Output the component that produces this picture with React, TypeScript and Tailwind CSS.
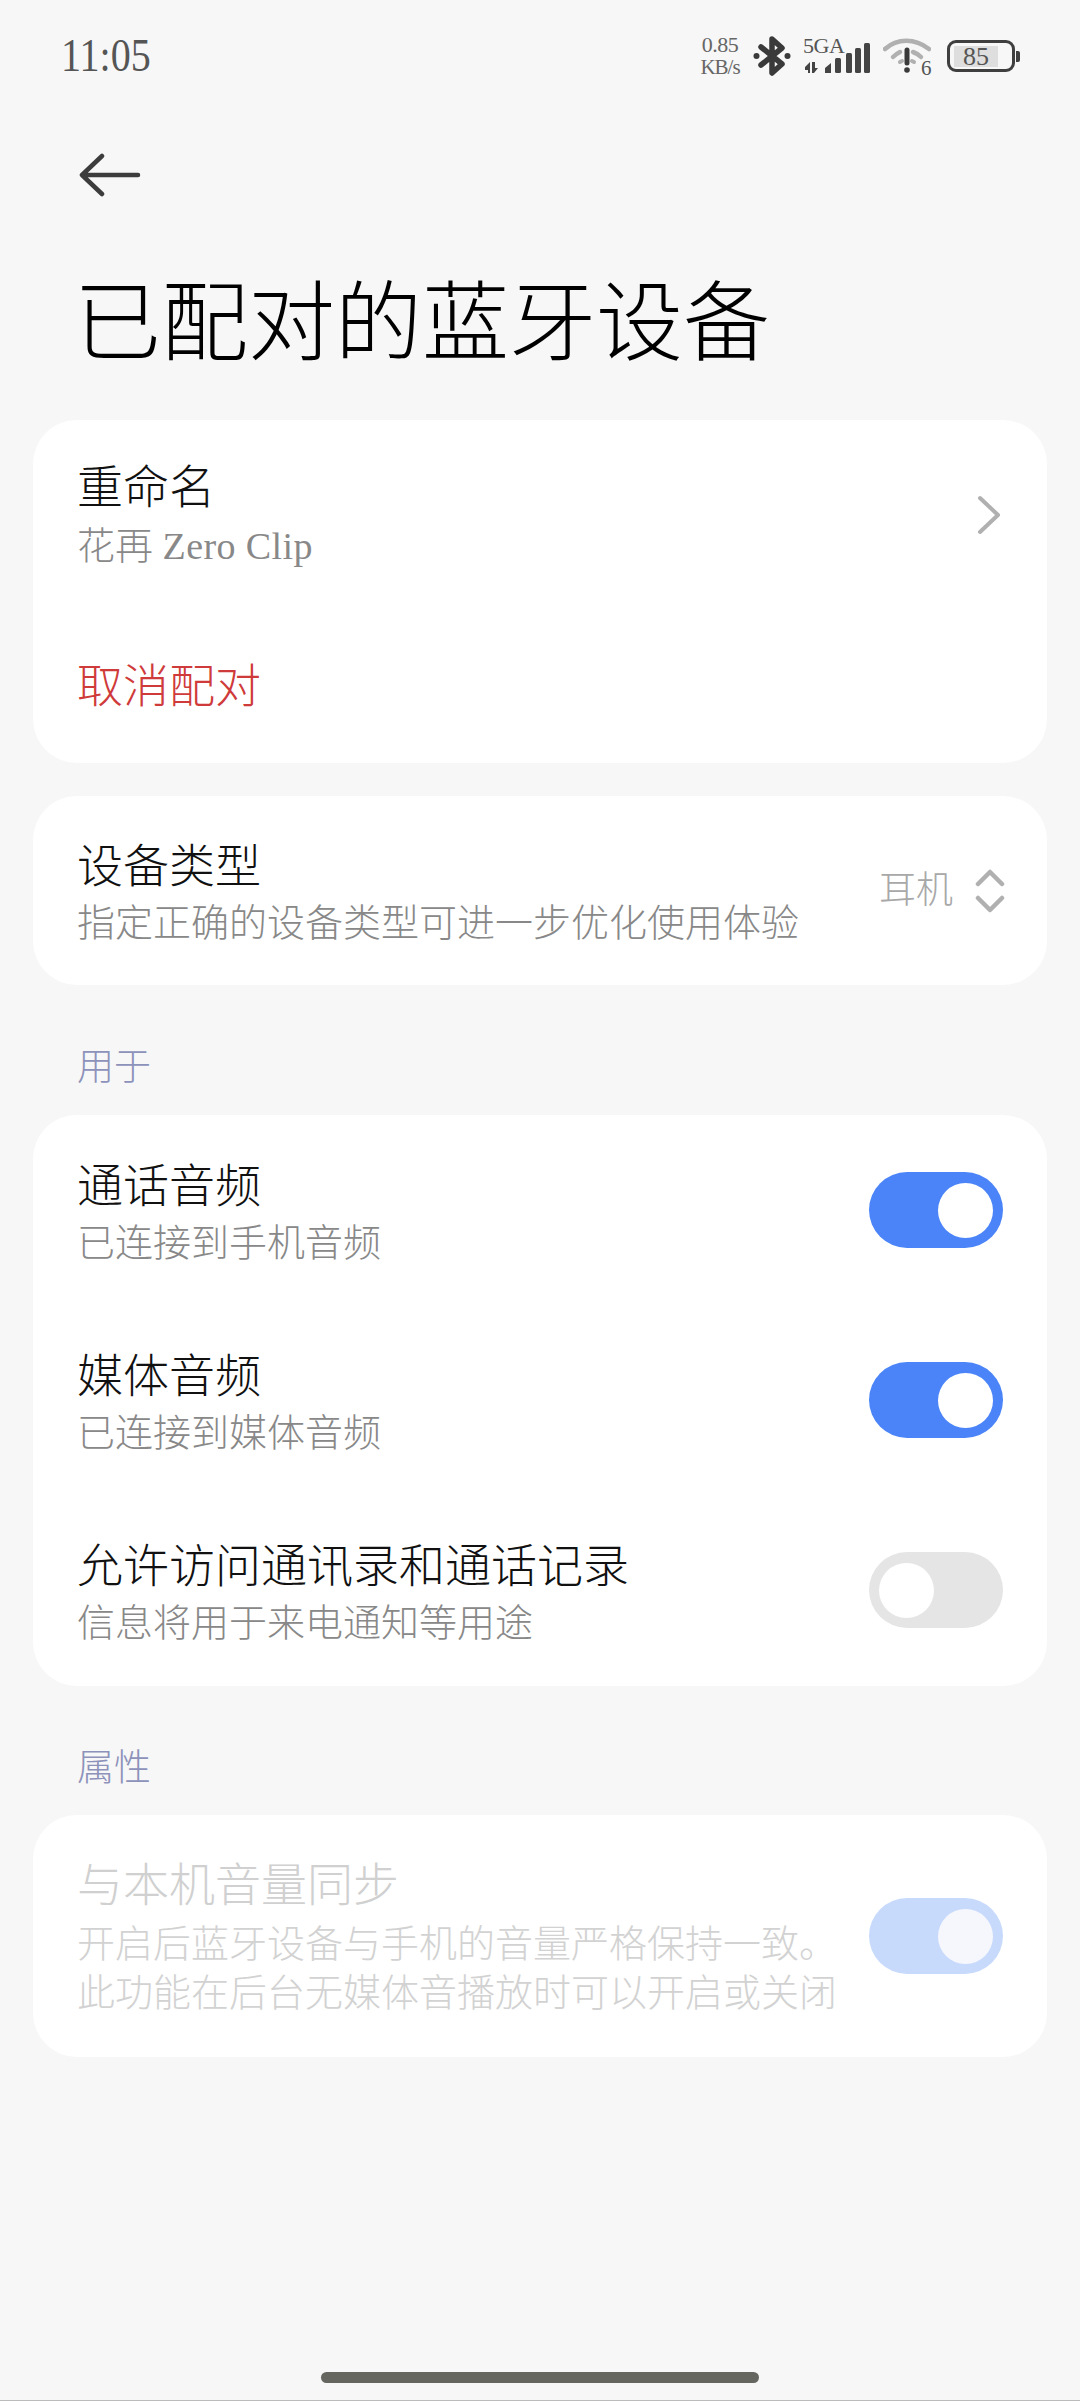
const serif = "font-['Liberation_Serif','Noto_Sans_CJK_SC',serif] font-light";

function Toggle({ on, disabled }: { on: boolean; disabled?: boolean }) {
  const track = disabled ? "bg-[#c7dafc]" : on ? "bg-[#4a84f8]" : "bg-[#e5e5e5]";
  const knob = disabled ? "bg-[#f6f7fd]" : "bg-white";
  return (
    <div
      className={`flex h-[76px] w-[134px] shrink-0 items-center rounded-full px-[10px] ${track} ${
        on ? "justify-end" : "justify-start"
      }`}
    >
      <div className={`size-[55px] rounded-full ${knob}`} />
    </div>
  );
}

function Row({ title, sub, on }: { title: string; sub: string; on: boolean }) {
  return (
    <div className="flex h-[190px] items-center justify-between pl-[44px] pr-[44px]">
      <div className="self-start pt-[42px]">
        <div className="h-[60px] text-[46px] leading-[60px] text-[#111]">{title}</div>
        <div className="mt-[1px] h-[50px] text-[38px] leading-[50px] text-[#888]">{sub}</div>
      </div>
      <Toggle on={on} />
    </div>
  );
}

function StatusIcons() {
  return (
    <div className="flex items-center text-[#444]">
      <div className="flex w-[44px] flex-col items-center text-[22px] leading-[22px] tracking-[-0.5px] text-[#666]">
        <span>0.85</span>
        <span className="text-[21px] tracking-[-1px]">KB/s</span>
      </div>
      <svg width="38" height="42" viewBox="0 0 38 42" fill="none" stroke="#3a3a3a" strokeWidth="5.5" strokeLinecap="round" strokeLinejoin="round" className="ml-[11px]">
        <path d="M8 12 L29 29 L19 38 V4 L29 13 L8 30" />
        <circle cx="3.5" cy="21" r="3" fill="#3a3a3a" stroke="none" />
        <circle cx="34.5" cy="21" r="3" fill="#3a3a3a" stroke="none" />
      </svg>
      <div className="relative ml-[12px] h-[36px] w-[68px]">
        <span className="absolute left-0 top-[-3px] text-[22px] leading-[22px] tracking-[-0.5px] text-[#555]">5GA</span>
        <svg className="absolute inset-0" width="68" height="36" viewBox="0 0 68 36" fill="#444">
          <path d="M2 29 L7 24 V35 H5 V32 H2 Z" />
          <path d="M9 24 H12 V30 L15 30 L11 35 H9 Z" />
          <path d="M22 35 V30 L28 25 V35 Z" />
          <rect x="32" y="20" width="6" height="15" rx="1.5" />
          <rect x="43" y="15" width="6" height="20" rx="1.5" />
          <rect x="52" y="10" width="6" height="25" rx="1.5" />
          <rect x="61" y="5" width="6" height="30" rx="1.5" />
        </svg>
      </div>
      <div className="relative ml-[12px] h-[38px] w-[48px]">
        <svg className="absolute inset-0" width="48" height="38" viewBox="0 0 48 38" fill="none" strokeLinecap="round">
          <path d="M2 12 C14 1 32 1 46 12" stroke="#b0b0b0" strokeWidth="4.5" />
          <path d="M10 20 C13 17 15 16 17 15" stroke="#b0b0b0" strokeWidth="4.5" />
          <path d="M30 15 C33 16 35 17 38 20" stroke="#b0b0b0" strokeWidth="4.5" />
          <path d="M17 25 L19 24" stroke="#b0b0b0" strokeWidth="4" />
          <path d="M29 24 L31 25" stroke="#b0b0b0" strokeWidth="4" />
          <path d="M24 13 V26" stroke="#3a3a3a" strokeWidth="5" />
          <circle cx="24" cy="33" r="2.8" fill="#3a3a3a" />
        </svg>
        <span className="absolute left-[38px] top-[20px] text-[21px] leading-[22px] text-[#555]">6</span>
      </div>
      <div className="ml-[16px] flex items-center">
        <div className="flex h-[32px] w-[68px] items-center rounded-[9px] border-[3px] border-[#3f3f3f] px-[4px]">
          <div className="flex h-[21px] w-[44px] items-center justify-center bg-[#dedede] text-[26px] text-[#555]">85</div>
        </div>
        <div className="ml-[1px] h-[11px] w-[4px] rounded-r-[2px] bg-[#3f3f3f]" />
      </div>
    </div>
  );
}

export default function App() {
  return (
    <div className={`relative h-[2401px] w-[1080px] overflow-hidden bg-[#f7f7f7] ${serif}`}>
      <div className="flex h-[112px] items-center justify-between pl-[61px] pr-[60px]">
        <span className="mb-[2px] origin-left scale-x-[0.87] text-[46px] text-[#555]">11:05</span>
        <StatusIcons />
      </div>
      <div className="flex h-[124px] items-center pl-[79px] pt-[2px]">
        <svg width="62" height="44" viewBox="0 0 62 44" fill="none" stroke="#3c3c3c" strokeWidth="4.5" strokeLinecap="round" strokeLinejoin="round">
          <path d="M59 22 H3 M23 3 L3 22 L23 41" />
        </svg>
      </div>
      <h1 className="mt-[39px] h-[100px] pl-[74px] text-[87px] font-light leading-[100px] text-black">已配对的蓝牙设备</h1>

      <div className="mt-[45px] flex flex-col px-[33px]">
        <div className="h-[343px] rounded-[44px] bg-white pl-[44px] pr-[44px] pt-[38px]">
          <div className="flex items-center justify-between">
            <div>
              <div className="h-[60px] text-[46px] leading-[60px] text-[#111]">重命名</div>
              <div className="mt-[3px] h-[50px] text-[38px] leading-[50px] text-[#888]">
                花再 <span className="tracking-[0.4px]">Zero Clip</span>
              </div>
            </div>
            <svg width="24" height="40" viewBox="0 0 24 40" fill="none" stroke="#b0b0b0" strokeWidth="4" strokeLinecap="round" strokeLinejoin="round" className="mr-[2px]">
              <path d="M3 3 L21 20 L3 37" />
            </svg>
          </div>
          <div className="mt-[86px] h-[60px] text-[46px] leading-[60px] text-[#cf3a3a]">取消配对</div>
        </div>

        <div className="mt-[33px] flex h-[189px] items-center justify-between rounded-[44px] bg-white pl-[44px] pr-[42px]">
          <div className="self-start pt-[41px]">
            <div className="h-[60px] text-[46px] leading-[60px] text-[#111]">设备类型</div>
            <div className="mt-[1px] h-[50px] text-[38px] leading-[50px] text-[#888]">指定正确的设备类型可进一步优化使用体验</div>
          </div>
          <div className="flex items-center">
            <span className="text-[37px] text-[#a8a8a8]">耳机</span>
            <svg width="30" height="46" viewBox="0 0 30 46" fill="none" stroke="#b0b0b0" strokeWidth="4.5" strokeLinecap="round" strokeLinejoin="round" className="ml-[22px]">
              <path d="M3 16 L15 4 L27 16 M3 30 L15 42 L27 30" />
            </svg>
          </div>
        </div>

        <div className="mt-[58px] h-[50px] pl-[44px] text-[37px] leading-[50px] text-[#8d92ba]">用于</div>
        <div className="mt-[22px] h-[571px] overflow-hidden rounded-[44px] bg-white">
          <Row title="通话音频" sub="已连接到手机音频" on />
          <Row title="媒体音频" sub="已连接到媒体音频" on />
          <Row title="允许访问通讯录和通话记录" sub="信息将用于来电通知等用途" on={false} />
        </div>

        <div className="mt-[58px] h-[50px] pl-[44px] text-[37px] leading-[50px] text-[#8d92ba]">属性</div>
        <div className="mt-[21px] flex h-[242px] items-center justify-between rounded-[44px] bg-white pl-[44px] pr-[44px]">
          <div className="self-start pt-[41px]">
            <div className="h-[60px] text-[46px] leading-[60px] text-[#d0d0d0]">与本机音量同步</div>
            <div className="mt-[4px] text-[38px] leading-[49px] text-[#d2d2d2]">
              开启后蓝牙设备与手机的音量严格保持一致。
              <br />
              此功能在后台无媒体音播放时可以开启或关闭
            </div>
          </div>
          <Toggle on disabled />
        </div>
      </div>

      <div className="absolute bottom-[18px] left-[321px] h-[11px] w-[438px] rounded-full bg-[#666660]" />
      <div className="absolute bottom-0 left-0 h-[1px] w-full bg-[#bbbbbb]" />
    </div>
  );
}
